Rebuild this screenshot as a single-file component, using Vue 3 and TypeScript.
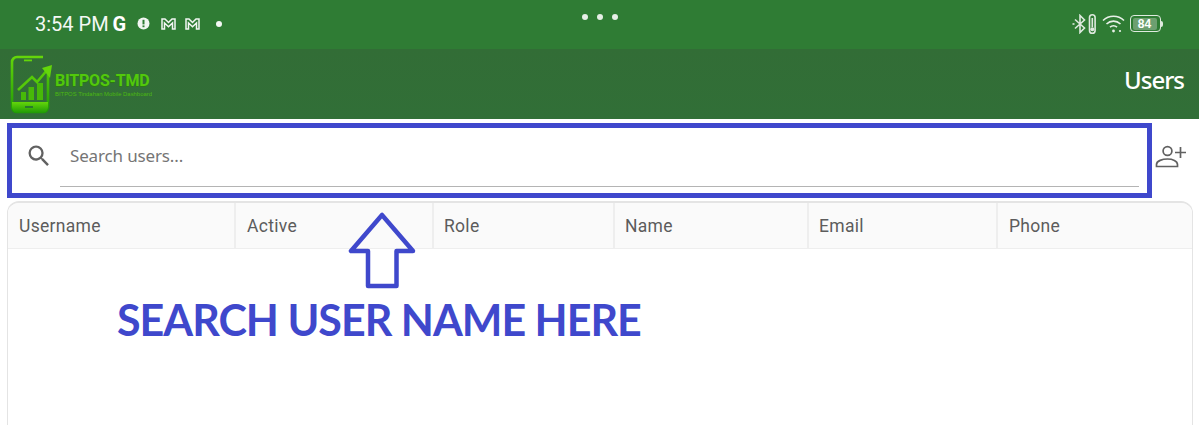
<script setup lang="ts">
const columns = [
  { label: 'Username', width: 228 },
  { label: 'Active', width: 198 },
  { label: 'Role', width: 181 },
  { label: 'Name', width: 194 },
  { label: 'Email', width: 189 },
  { label: 'Phone', width: 196 },
];
</script>

<template>
  <div class="page">
    <div class="status-bar">
      <div class="status-left">
        <span class="clock">3:54 PM</span>
        <span class="g-mark">G</span>
        <svg class="alert" width="13" height="13" viewBox="0 0 13 13">
          <circle cx="6.500" cy="6.500" r="6" fill="#f2f6f2" />
          <rect x="5.500" y="2.800" width="2" height="4.600" fill="#2f7c34" />
          <rect x="5.500" y="8.400" width="2" height="1.800" fill="#2f7c34" />
        </svg>
        <svg class="mail" width="15" height="12" viewBox="0 0 15 12" fill="none" stroke="#f2f6f2" stroke-width="1.500">
          <path d="M1 1H4L7.500 4.500 11 1H14V11H11.500V5L7.500 8.800 3.500 5V11H1Z" />
        </svg>
        <svg class="mail second" width="15" height="12" viewBox="0 0 15 12" fill="none" stroke="#f2f6f2" stroke-width="1.500">
          <path d="M1 1H4L7.500 4.500 11 1H14V11H11.500V5L7.500 8.800 3.500 5V11H1Z" />
        </svg>
        <span class="dot"></span>
      </div>
      <div class="status-dots"><i></i><i></i><i></i></div>
      <div class="status-right">
        <svg width="24" height="20" viewBox="0 0 24 20" fill="none" stroke="#dfeadf" stroke-width="1.600">
          <path d="M3 5.500 12.500 14 8 18.500V1.500L12.500 6 3 14.500" />
          <path d="M0.500 10H2.500" />
          <rect x="17.500" y="0.800" width="5.600" height="18.400" rx="2.800" />
          <rect x="19.500" y="4" width="1.600" height="9" fill="#dfeadf" stroke="none" />
          <circle cx="20.300" cy="15.300" r="2" fill="#dfeadf" stroke="none" />
        </svg>
        <svg class="wifi" width="23" height="20" viewBox="0 0 23 20" fill="none" stroke="#e8f0e8" stroke-width="1.600">
          <path d="M1 6.500C7 .8 16 .8 22 6.500M4.500 10C8.500 6.200 14.500 6.200 18.500 10M8 13.200C10 11.400 13 11.400 15 13.200" />
          <circle cx="11.500" cy="17" r="1.400" fill="#e8f0e8" stroke="none" />
          <circle cx="18" cy="17" r="1.100" fill="#e8f0e8" stroke="none" />
        </svg>
        <div class="battery"><span class="battery-level">84</span></div>
        <span class="battery-tip"></span>
      </div>
    </div>

    <header class="app-bar">
      <div class="logo">
        <svg width="42" height="60" viewBox="0 0 42 60" fill="none">
          <defs>
            <linearGradient id="logoFill" x1="0" y1="0" x2="0" y2="1">
              <stop offset="0" stop-color="#64d60a" />
              <stop offset="1" stop-color="#1f9a06" />
            </linearGradient>
          </defs>
          <path d="M33 3H7a5 5 0 0 0-5 5v45a5 5 0 0 0 5 5h26a5 5 0 0 0 5-5V15" stroke="url(#logoFill)" stroke-width="2.600" />
          <path d="M2 48H38V53a6 6 0 0 1-6 6H8a6 6 0 0 1-6-6z" fill="url(#logoFill)" />
          <rect x="11" y="38" width="5" height="8" fill="#47b908" />
          <rect x="18.500" y="33" width="5.500" height="13" fill="#47b908" />
          <rect x="27" y="29" width="6" height="17" fill="#47b908" />
          <path d="M8 36 22 23l5 5L38 15" stroke="#55c909" stroke-width="2.600" />
          <path d="M32 14 42 11 40 24z" fill="#64d60a" />
          <rect x="14" y="5.500" width="8" height="1.800" fill="#64d60a" />
          <rect x="15" y="52" width="8" height="2" fill="#2a7a2d" />
        </svg>
        <div class="logo-text">
          <div class="logo-name">BITPOS-TMD</div>
          <div class="logo-tag">BITPOS Tindahan Mobile Dashboard</div>
        </div>
      </div>
      <div class="page-title">Users</div>
    </header>

    <main class="content">
      <div class="search-row">
        <svg class="search-icon" width="28" height="28" viewBox="0 0 24 24" fill="#616161">
          <path d="M15.500 14h-.79l-.28-.27A6.470 6.470 0 0 0 16 9.500 6.500 6.500 0 1 0 9.500 16c1.610 0 3.090-.59 4.230-1.570l.27.28v.79l5 4.990L20.490 19l-4.990-5zm-6 0C7.010 14 5 11.990 5 9.500S7.010 5 9.500 5 14 7.010 14 9.500 11.990 14 9.500 14z" />
        </svg>
        <div class="search-field">Search users...</div>
        <svg class="add-user" width="32" height="26" viewBox="0 0 32 26" fill="none" stroke="#616161" stroke-width="1.700">
          <circle cx="12.500" cy="8" r="4.400" />
          <path d="M1.500 23.500v-2c0-3.600 6-5.500 11-5.500s10 1.900 10 5.500v2z" />
          <path d="M20 9.500h11M25.500 4v11" />
        </svg>
      </div>

      <div class="table">
        <div class="table-head">
          <div v-for="col in columns" :key="col.label" class="table-cell" :style="{ width: col.width + 'px' }">
            {{ col.label }}
          </div>
        </div>
      </div>
    </main>

    <div class="note-box"></div>
    <svg class="note-arrow" width="68" height="78" viewBox="0 0 68 78" fill="none" stroke="#3f48cc" stroke-width="4.500" stroke-linejoin="round">
      <path d="M34 3 3 39H20V74H48.500V39H65Z" />
    </svg>
    <div class="note-text">SEARCH USER NAME HERE</div>
  </div>
</template>

<style scoped>
.page {
  position: relative;
  width: 1199px;
  height: 425px;
  overflow: hidden;
  background: #fff;
  font-family: Roboto, sans-serif;
}

.status-bar {
  height: 49px;
  display: flex;
  align-items: center;
  justify-content: space-between;
  position: relative;
  padding: 0 36px 2px 35px;
  box-sizing: border-box;
  background: #2f7c34;
  color: #fff;
}

.status-left {
  display: flex;
  align-items: center;
}

.clock {
  font-size: 20px;
  color: #f4f8f4;
}

.g-mark {
  margin-left: 4px;
  font-weight: 700;
  font-size: 20px;
}

.alert {
  margin-left: 11px;
}

.mail {
  margin-left: 11px;
}

.mail.second {
  margin-left: 9px;
}

.dot {
  width: 6px;
  height: 6px;
  margin-left: 16px;
  border-radius: 50%;
  background: #f4f8f4;
}

.status-dots {
  position: absolute;
  left: 582px;
  top: 14px;
  display: flex;
  gap: 9px;
}

.status-dots i {
  display: block;
  width: 6px;
  height: 6px;
  border-radius: 50%;
  background: #e6efe6;
}

.status-right {
  display: flex;
  align-items: center;
}

.wifi {
  margin-left: 6px;
}

.battery {
  width: 31px;
  height: 17px;
  margin-left: 5px;
  padding: 1.500px;
  box-sizing: border-box;
  border: 1px solid #dfeadf;
  border-radius: 4px;
}

.battery-level {
  display: block;
  width: 24px;
  height: 12px;
  border-radius: 2px;
  background: #6d9f70;
  font-family: "Liberation Sans", sans-serif;
  font-weight: 700;
  font-size: 12px;
  line-height: 12px;
  text-align: center;
  color: #fff;
}

.battery-tip {
  width: 2px;
  height: 6px;
  background: #dfeadf;
  border-radius: 0 2px 2px 0;
}

.app-bar {
  height: 70px;
  display: flex;
  align-items: center;
  justify-content: space-between;
  padding: 0 15px 0 10px;
  box-sizing: border-box;
  background: linear-gradient(#326d36, #316f37);
}

.logo {
  display: flex;
  align-items: center;
}

.logo-text {
  margin-left: 3px;
  margin-top: 2px;
}

.logo-name {
  font-weight: 700;
  font-size: 16px;
  line-height: 18px;
  letter-spacing: -0.2px;
  color: #52c80c;
  text-shadow: 0 1px 0 #2a7a12;
}

.logo-tag {
  font-family: "Liberation Sans", sans-serif;
  font-size: 5.900px;
  line-height: 8px;
  color: #4cb811;
  white-space: nowrap;
}

.page-title {
  margin-bottom: 9px;
  font-family: "Noto Sans", sans-serif;
  font-weight: 500;
  font-size: 24px;
  letter-spacing: -1px;
  color: #fff;
}

.content {
  padding: 4px 6px 0 7px;
}

.search-row {
  height: 78px;
  padding-bottom: 12px;
  box-sizing: border-box;
  display: flex;
  align-items: center;
}

.search-icon {
  margin-left: 18px;
  flex: none;
}

.search-field {
  width: 1079px;
  height: 62px;
  margin-left: 7px;
  padding-left: 10px;
  box-sizing: border-box;
  border-bottom: 1px solid #b4b4b4;
  font-family: "Noto Sans", sans-serif;
  font-size: 17px;
  line-height: 61px;
  letter-spacing: -0.15px;
  color: #757575;
}

.add-user {
  margin-left: 16px;
  flex: none;
}

.table {
  height: 240px;
  box-sizing: border-box;
  border: 1px solid #e4e4e4;
  border-top-width: 2px;
  border-bottom: 0;
  border-radius: 12px 12px 0 0;
  overflow: hidden;
}

.table-head {
  display: flex;
  height: 46px;
  box-sizing: border-box;
  border-bottom: 1px solid #eeeeee;
  background: #fafafa;
}

.table-cell {
  flex: none;
  padding-left: 11px;
  box-sizing: border-box;
  border-right: 2px solid #eeeeee;
  font-size: 17.500px;
  line-height: 46px;
  letter-spacing: 0.3px;
  color: #5c5c5c;
}

.table-cell:nth-child(n + 3):not(:last-child) {
  padding-left: 10px;
}

.table-cell:last-child {
  border-right: 0;
}

.note-box {
  position: absolute;
  left: 7px;
  top: 123px;
  width: 1145px;
  height: 75px;
  box-sizing: border-box;
  border: 5px solid #3f48cc;
}

.note-arrow {
  position: absolute;
  left: 348px;
  top: 212px;
}

.note-text {
  position: absolute;
  left: 117px;
  top: 293px;
  font-family: Lato, sans-serif;
  font-weight: 700;
  font-size: 43px;
  line-height: 54px;
  letter-spacing: -1px;
  color: #3f48cc;
  white-space: nowrap;
}
</style>

<style>
html,
body {
  margin: 0;
  background: #fff;
}
</style>
